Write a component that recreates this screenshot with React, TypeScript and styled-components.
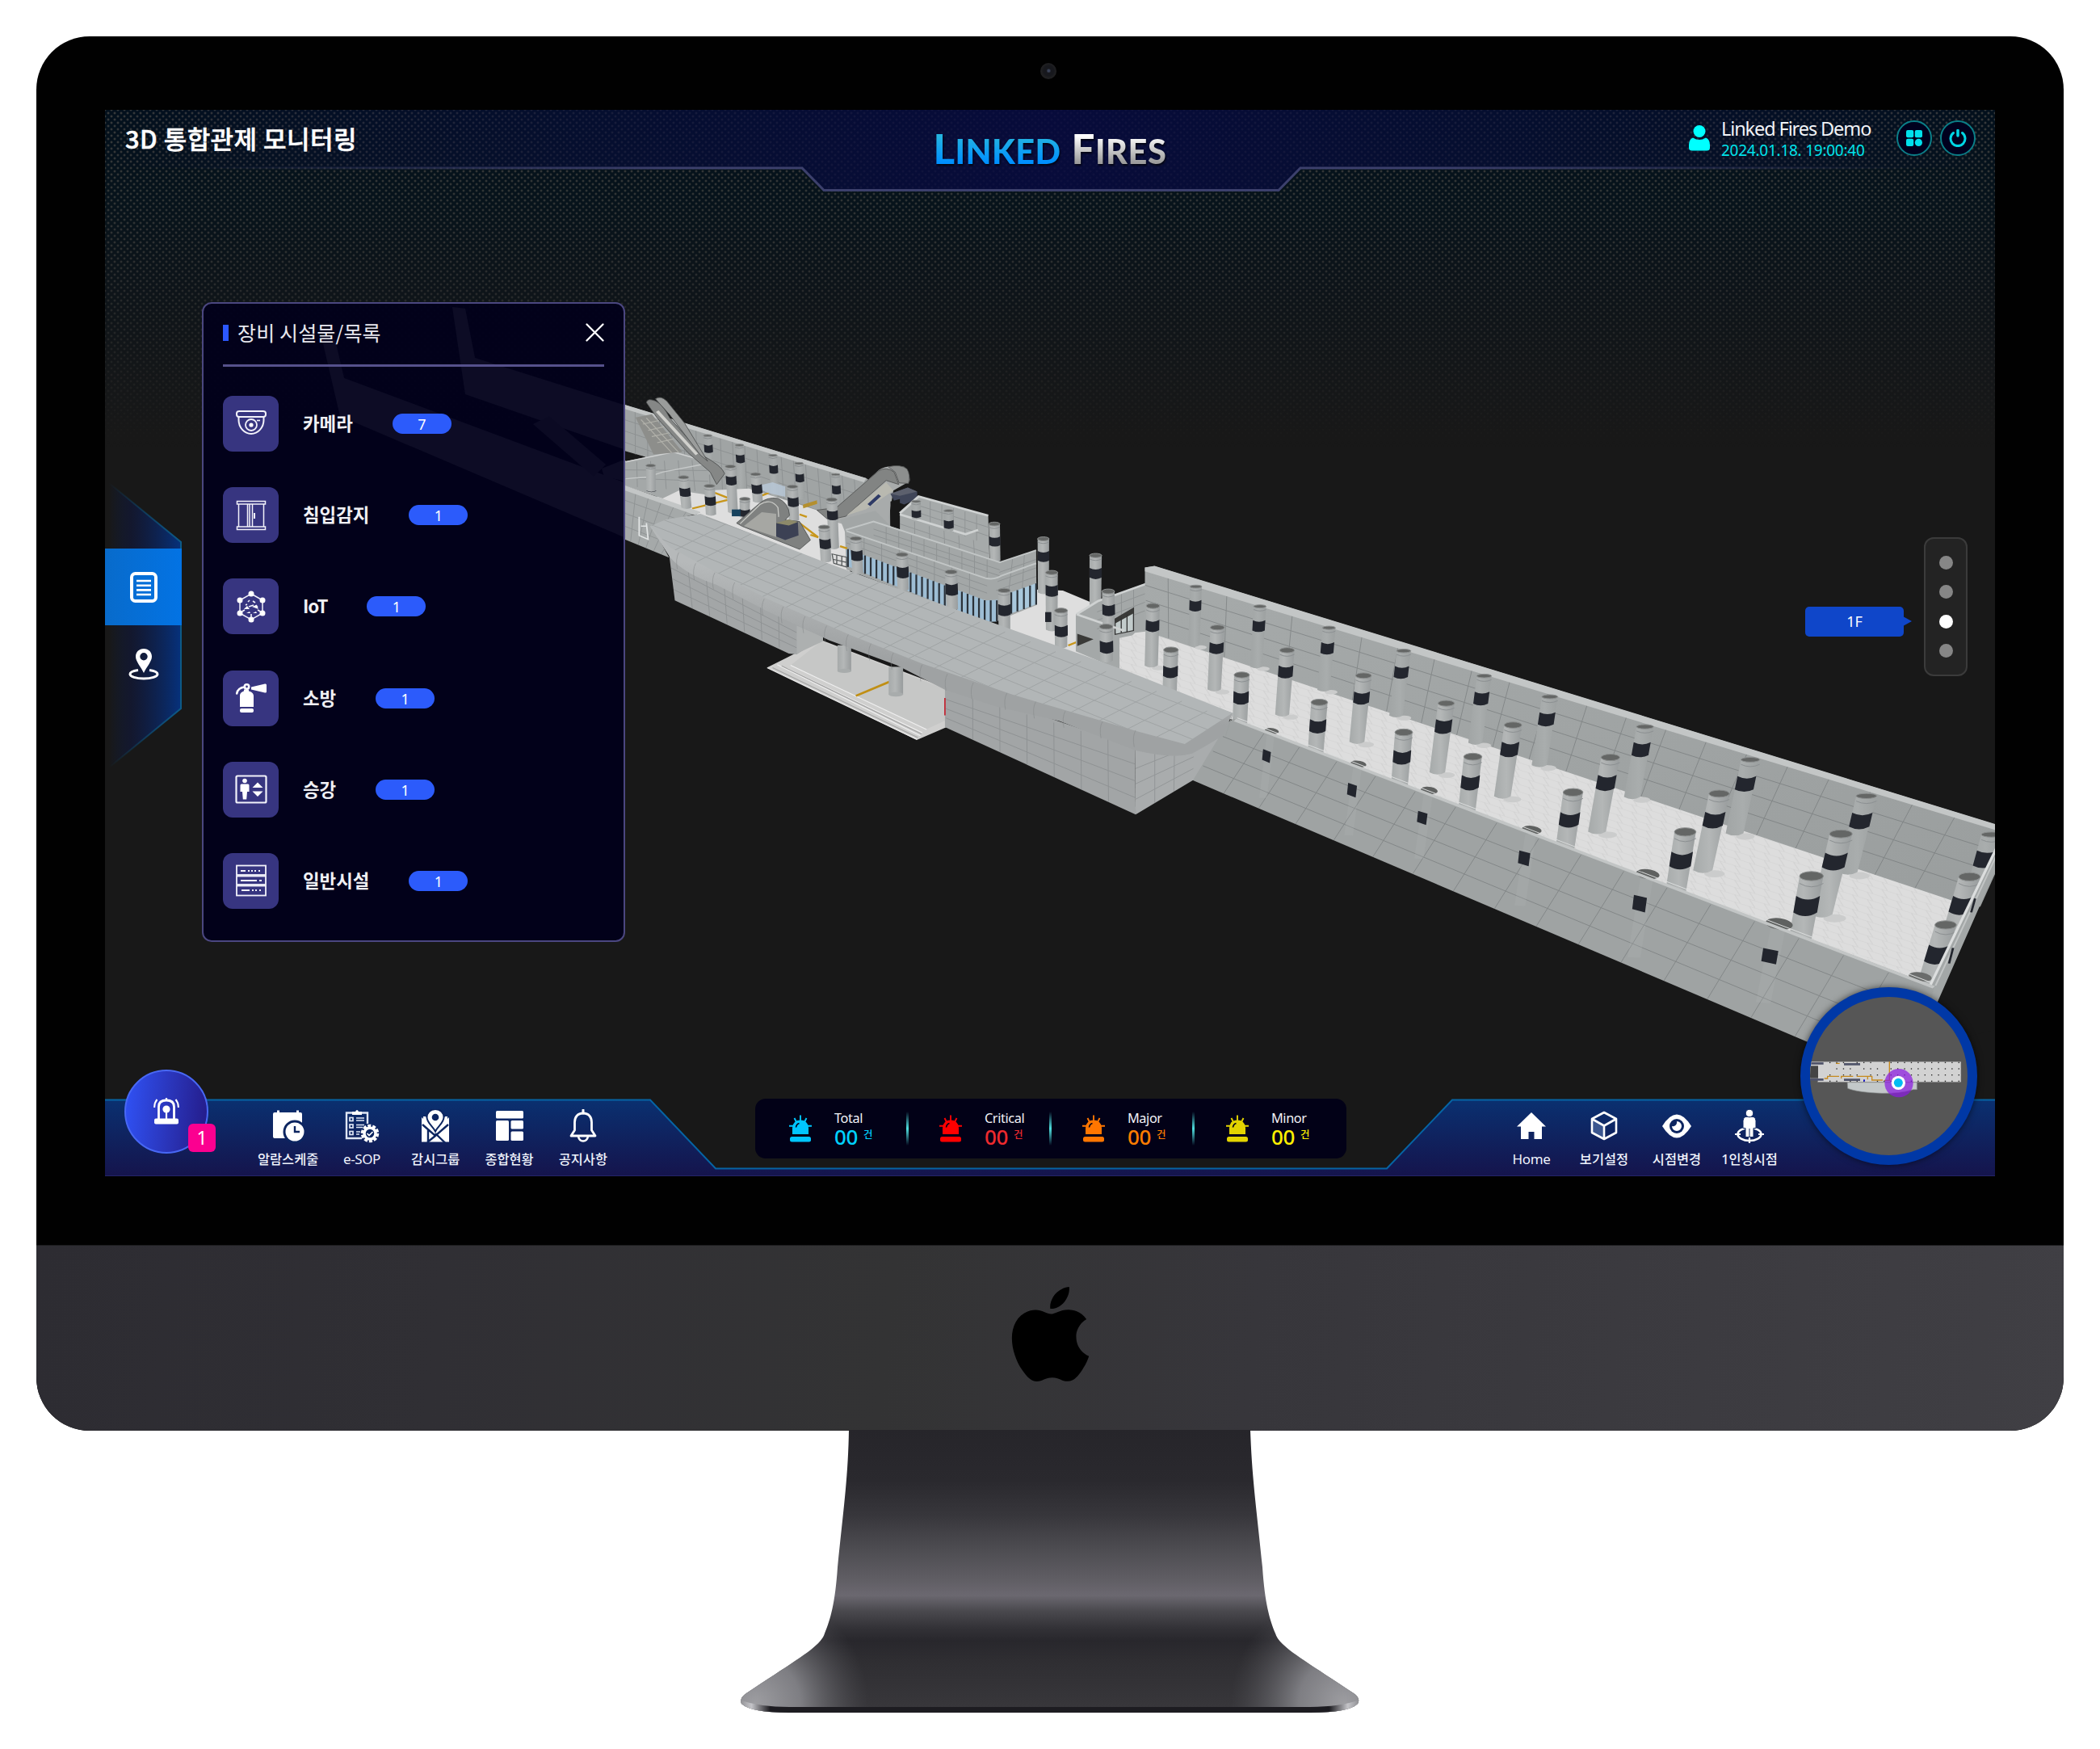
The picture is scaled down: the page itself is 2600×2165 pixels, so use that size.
import React from "react";
import styled, { createGlobalStyle } from "styled-components";
import { SiApple } from "react-icons/si";

const GlobalStyle = createGlobalStyle`
  *, *::before, *::after { box-sizing: border-box; }
  html, body { margin: 0; padding: 0; background: #fff; }
  body { font-family: "Noto Sans", "Noto Sans CJK KR", sans-serif; color: #fff; overflow: hidden; }
  button { font: inherit; color: inherit; }
  svg { display: block; flex: none; }
`;

/* ------------------------------------------------------------ device */

const Page = styled.main`
  width: 2600px;
  height: 2165px;
  padding-top: 45px;
  display: flex;
  flex-direction: column;
  align-items: center;
  background: #fff;
`;

const Monitor = styled.div`
  width: 2510px;
  height: 1726px;
  flex: none;
  border-radius: 66px;
  overflow: hidden;
  background: #010101;
  display: flex;
  flex-direction: column;
  align-items: center;
`;

const TopBezel = styled.div`
  height: 91px;
  width: 100%;
  display: flex;
  justify-content: center;
  padding: 33px 4px 0 0;
`;

const Camera = styled.i`
  width: 20px;
  height: 20px;
  border-radius: 50%;
  background: radial-gradient(circle at 52% 48%, #3a4258 0 8%, #17181d 20% 42%, #1f1f21 60%, #242424 100%);
`;

const Chin = styled.div`
  margin-top: auto;
  width: 100%;
  height: 230px;
  display: flex;
  justify-content: center;
  padding-top: 51px;
  color: #000;
  border-top: 1px solid #1c1c1e;
  background: linear-gradient(96deg, #2d2c32 0%, #302f34 20%, #333334 42%, #37363b 60%, #3c3b40 82%, #403f44 100%);
`;

const StandArt = styled.svg`
  margin-top: -1px;
`;

/* ------------------------------------------------------------ screen */

const Screen = styled.section`
  position: relative;
  width: 2340px;
  height: 1320px;
  flex: none;
  overflow: hidden;
  background: linear-gradient(#03101c 0, #07131b 110px, #0e1419 230px, #181818 400px);
  display: flex;
  flex-direction: column;

  &::before {
    content: "";
    position: absolute;
    inset: 0 0 auto 0;
    height: 420px;
    background-image: radial-gradient(circle, rgba(98, 92, 84, 0.55) 0.9px, transparent 1.9px),
      radial-gradient(circle, rgba(98, 92, 84, 0.55) 0.9px, transparent 1.9px);
    background-size: 8px 8px;
    background-position: 0 0, 4px 4px;
    mask-image: linear-gradient(#000 0, rgba(0, 0, 0, 0.75) 40%, transparent 100%);
  }
`;

const SceneArt = styled.svg`
  position: absolute;
  inset: 0;
`;

const Header = styled.header`
  position: relative;
  height: 110px;
  display: flex;
  justify-content: space-between;
  align-items: flex-start;
`;

const HeaderArt = styled.svg`
  position: absolute;
  inset: 0;
`;

const Title = styled.h1`
  position: relative;
  margin: 13px 0 0 25px;
  width: 500px;
  font-size: 31px;
  line-height: 44px;
  font-weight: 500;
  letter-spacing: 0.45px;
  -webkit-text-stroke: 0.5px #fff;
  font-family: "Noto Sans CJK KR", sans-serif;
`;

const Brand = styled.div`
  position: relative;
  margin-top: 15px;
  display: flex;
  gap: 13px;
  font-family: Lato, sans-serif;
  font-weight: 900;
  font-size: 41.5px;
  line-height: 66px;
`;

const BrandWord = styled.span<{ $from: string; $to: string; $ls: number }>`
  letter-spacing: ${(p) => p.$ls}px;
  background: linear-gradient(${(p) => p.$from} 25%, ${(p) => p.$to} 72%);
  background-clip: text;
  -webkit-background-clip: text;
  color: transparent;
  filter: drop-shadow(1px 2px 1px rgba(0, 0, 0, 0.7));
  &::first-letter {
    font-size: 51px;
  }
`;

const Account = styled.div`
  position: relative;
  width: 525px;
  display: flex;
  justify-content: flex-end;
  align-items: center;
  padding: 6px 24px 0 0;
`;

const AccountText = styled.div`
  width: 207px;
  margin: 2px 0 0 14px;
  display: flex;
  flex-direction: column;
`;

const UserName = styled.span`
  font-size: 23.5px;
  line-height: 30px;
  letter-spacing: -1.1px;
  color: #f1f3f7;
  white-space: nowrap;
`;

const Stamp = styled.time`
  font-size: 19px;
  line-height: 25px;
  letter-spacing: -0.25px;
  color: #00e3ea;
  white-space: nowrap;
`;

const RoundButton = styled.button`
  width: 44px;
  height: 44px;
  margin: 0 0 0 10px;
  padding: 0;
  border: 2.5px solid #0b7f88;
  border-radius: 50%;
  background: #00001e;
  display: grid;
  place-items: center;
`;

const Body = styled.div`
  position: relative;
  flex: 1;
  display: flex;
  align-items: flex-start;
`;

/* -------------------------------------------------------- side tabs */

const SideTabs = styled.nav`
  position: relative;
  width: 95px;
  height: 352px;
  margin-top: 352px;
  padding-top: 81px;
`;

const SideArt = styled.svg`
  position: absolute;
  inset: 0;
`;

const SideTab = styled.button<{ $active?: boolean }>`
  position: relative;
  width: 95px;
  height: 95px;
  padding: 0;
  border: 0;
  display: grid;
  place-items: center;
  background: ${(p) => (p.$active ? "linear-gradient(90deg,#086bcb,#0373e4)" : "none")};
`;

/* ------------------------------------------------------------ panel */

const Panel = styled.aside`
  width: 524px;
  height: 792px;
  margin: 128px 0 0 25px;
  padding: 0 24px;
  border: 2.5px solid #4b4780;
  border-radius: 12px;
  background: rgba(1, 0, 27, 0.93);
`;

const PanelHead = styled.div`
  height: 78px;
  display: flex;
  align-items: center;
  border-bottom: 3px solid #56518c;
  padding-bottom: 4px;
`;

const PanelMark = styled.i`
  width: 7px;
  height: 20px;
  background: #2c58ff;
  margin-right: 11px;
`;

const PanelTitle = styled.h2`
  margin: -2px 0 0;
  flex: 1;
  font-size: 25px;
  font-weight: 400;
  line-height: 36px;
  letter-spacing: 0.15px;
  color: #e8e8ee;
  font-family: "Noto Sans CJK KR", sans-serif;
`;

const DeviceList = styled.ul`
  list-style: none;
  margin: 36px 0 0;
  padding: 0;
  display: flex;
  flex-direction: column;
  gap: 44.2px;
`;

const DeviceRow = styled.li`
  display: flex;
  align-items: center;
  height: 69px;
`;

const DeviceIcon = styled.span`
  width: 69px;
  height: 69px;
  border-radius: 12px;
  background: #373580;
  display: grid;
  place-items: center;
`;

const DeviceName = styled.span<{ $latin?: boolean }>`
  margin: -3px 49px 0 30px;
  font-size: 22.4px;
  font-weight: 700;
  line-height: 30px;
  letter-spacing: ${(p) => (p.$latin ? -1.2 : 0)}px;
  font-family: "Noto Sans CJK KR", sans-serif;
  color: #f0f0f4;
`;

const Pill = styled.span`
  width: 73px;
  height: 25px;
  border-radius: 13px;
  background: #2c5bfb;
  font-size: 18px;
  line-height: 26px;
  text-align: center;
`;

/* --------------------------------------------------- floor selector */

const FloorGroup = styled.div`
  margin: 419px 34px 0 auto;
  display: flex;
  align-items: center;
`;

const FloorTag = styled.span`
  position: relative;
  width: 122px;
  height: 37px;
  margin-right: 25px;
  border-radius: 5px;
  background: #0f46c9;
  font-size: 18px;
  line-height: 37px;
  text-align: center;
  top: 18.5px;
  &::after {
    content: "";
    position: absolute;
    left: 121px;
    top: 12px;
    border: 6px solid transparent;
    border-left: 11px solid #0f46c9;
    border-right: 0;
  }
`;

const FloorRail = styled.div`
  width: 54px;
  height: 172px;
  border: 2px solid #3b3b3b;
  border-radius: 12px;
  background: #232323;
  display: flex;
  flex-direction: column;
  align-items: center;
  justify-content: center;
  gap: 19.6px;
`;

const FloorDot = styled.i<{ $on?: boolean }>`
  width: 17px;
  height: 17px;
  border-radius: 50%;
  background: ${(p) => (p.$on ? "#fff" : "#868686")};
`;

/* ----------------------------------------------------------- footer */

const Footer = styled.footer`
  position: relative;
  height: 96px;
  flex: none;
  display: flex;
  align-items: flex-start;
`;

const FooterArt = styled.svg`
  position: absolute;
  inset: 0;
`;

const NavGroup = styled.nav<{ $ml: number }>`
  position: relative;
  display: flex;
  margin-left: ${(p) => p.$ml}px;
`;

const NavItem = styled.a<{ $w: number }>`
  width: ${(p) => p.$w}px;
  padding-top: 12.5px;
  display: flex;
  flex-direction: column;
  align-items: center;
  gap: 9px;
`;

const NavLabel = styled.span<{ $latin?: boolean }>`
  font-size: ${(p) => (p.$latin ? 17 : 16.4)}px;
  line-height: 22px;
  font-weight: ${(p) => (p.$latin ? 400 : 500)};
  letter-spacing: ${(p) => (p.$latin ? -0.4 : 0)}px;
  color: #eef2fb;
  white-space: nowrap;
`;

const AlarmButton = styled.button`
  position: absolute;
  left: 24px;
  top: -36px;
  width: 104px;
  height: 104px;
  padding: 0;
  border-radius: 50%;
  border: 2.5px solid #4868f4;
  background: linear-gradient(95deg, #2f4ff0 5%, #2a34b8 55%, #241b88 100%);
  display: grid;
  place-items: center;
`;

const AlarmBadge = styled.span`
  position: absolute;
  left: 77px;
  top: 65px;
  width: 34px;
  height: 35px;
  border-radius: 6px;
  background: #fb0090;
  color: #fff;
  font-size: 23px;
  line-height: 35px;
  text-align: center;
`;

const StatusBar = styled.div`
  position: relative;
  width: 732px;
  height: 74px;
  margin-left: 167.5px;
  border-radius: 13px;
  background: #020117;
  display: flex;
`;

const StatusItem = styled.div<{ $w: number; $pl: number }>`
  position: relative;
  width: ${(p) => p.$w}px;
  padding: 14px 0 0 ${(p) => p.$pl}px;
  display: flex;
  gap: 28px;
  &:not(:first-child)::before {
    content: "";
    position: absolute;
    left: -1px;
    top: 16px;
    width: 3px;
    height: 42px;
    background: linear-gradient(transparent, #4fe0e0 50%, transparent);
  }
`;

const StatusText = styled.div`
  display: flex;
  flex-direction: column;
`;

const StatusName = styled.span`
  font-size: 16.3px;
  line-height: 20px;
  letter-spacing: -0.4px;
  color: #f2f2f6;
`;

const StatusCount = styled.span<{ $c: string }>`
  color: ${(p) => p.$c};
  font-size: 26px;
  line-height: 26px;
  font-weight: 500;
  display: flex;
  gap: 7px;
  letter-spacing: -0.4px;
  small {
    font-size: 12.5px;
    line-height: 21px;
  }
`;

const MiniMap = styled.div`
  position: absolute;
  left: 2099px;
  top: 1086px;
  width: 219px;
  height: 220px;
  border-radius: 50%;
  border: 12px solid #0038a6;
  background: #565656;
  overflow: hidden;
  box-shadow: 0 0 8px rgba(0, 0, 0, 0.6);
`;

/* ------------------------------------------------------- scene data */

type Pt = [number, number];
const pts = (a: Pt[]) => a.map((p) => p.join(",")).join(" ");
const mix = (a: Pt, b: Pt, t: number): Pt => [a[0] + (b[0] - a[0]) * t, a[1] + (b[1] - a[1]) * t];

/** Panel seams of a wall: a quad a-b (top edge), d-c (bottom edge). */
function Seams({ a, b, c, d, n, rows, bias = 1, color = "#74787a" }: { a: Pt; b: Pt; c: Pt; d: Pt; n: number; rows: number; bias?: number; color?: string }) {
  const lines: [Pt, Pt][] = [];
  for (let i = 1; i < n; i++) {
    const t = Math.pow(i / n, bias);
    lines.push([mix(a, b, t), mix(d, c, t)]);
  }
  for (let j = 1; j < rows; j++) lines.push([mix(a, d, j / rows), mix(b, c, j / rows)]);
  return (
    <g stroke={color} strokeWidth="1" opacity="0.42">
      {lines.map(([p, q], i) => (
        <line key={i} x1={p[0]} y1={p[1]} x2={q[0]} y2={q[1]} vectorEffect="non-scaling-stroke" />
      ))}
    </g>
  );
}

/** top x, top y, bottom x, bottom y, band top, band bottom, width */
type Col = [number, number, number, number, number, number, number];

function Columns({ list, cap, flat }: { list: Col[]; cap: number; flat?: boolean }) {
  return (
    <>
      {list.map(([tx, ty, bx, by, b0, b1, w], i) => {
        const h = w / 2;
        const at = (y: number) => tx + ((bx - tx) * (y - ty)) / (by - ty);
        const r = w * cap;
        const s0 = at(b0), s1 = at(b1);
        return (
          <g key={i}>
            <path d={`M${tx - h} ${ty}L${bx - h} ${by}Q${bx} ${by + r * 1.6} ${bx + h * 0.9} ${by}L${tx + h} ${ty}Z`} fill={flat ? "url(#colFlat)" : "url(#colFill)"} />
            <path d={`M${s0 - h} ${b0}Q${s0} ${b0 + r * 1.6} ${s0 + h} ${b0}L${s1 + h} ${b1}Q${s1} ${b1 + r * 1.6} ${s1 - h} ${b1}Z`} fill="#23262e" />
            <path d={`M${tx - h} ${ty + r * 1.6}q${h} ${r * 1.5} ${w} 0`} fill="none" stroke="#8c9092" vectorEffect="non-scaling-stroke" />
            <ellipse cx={tx} cy={ty} rx={h} ry={flat ? r * 0.8 : r} fill="#646665" stroke="#8d9090" vectorEffect="non-scaling-stroke" />
          </g>
        );
      })}
    </>
  );
}

const hallBack: Col[] = [
  [115, 162, 112, 340, 203, 233, 21], [228, 222, 222, 405, 264, 295, 22], [350, 287, 341, 475, 331, 363, 23],
  [482, 357, 469, 553, 403, 436, 25], [624, 433, 609, 636, 481, 517, 26], [740, 496, 722, 704, 543, 580, 28],
  [908, 587, 886, 800, 634, 673, 30], [1094, 687, 1067, 910, 737, 777, 33], [1299, 797, 1267, 1028, 848, 890, 36],
  [1520, 914, 1499, 1045, 962, 1008, 36],
];
const hallMid: Col[] = [
  [39, 220, 36, 402, 264, 294, 23], [153, 286, 148, 474, 331, 361, 25], [276, 355, 268, 550, 401, 434, 26],
  [411, 432, 400, 633, 480, 513, 28], [557, 516, 542, 725, 564, 602, 29], [675, 582, 657, 798, 633, 672, 31],
  [847, 680, 824, 905, 733, 774, 33], [1039, 790, 1011, 1022, 845, 887, 36], [1254, 912, 1221, 1156, 969, 1013, 40],
];
const hallFront: Col[] = [
  [71, 354, 69, 500, 402, 433, 26], [196, 430, 193, 590, 479, 513, 27], [333, 513, 326, 690, 564, 600, 29],
  [482, 604, 474, 790, 658, 694, 31], [604, 678, 593, 860, 734, 772, 32], [781, 786, 766, 975, 846, 884, 35],
  [979, 906, 962, 1100, 966, 1010, 38], [1202, 1040, 1181, 1250, 1100, 1150, 42], [1481, 1042, 1450, 1225, 1100, 1148, 38],
  [1439, 1188, 1408, 1365, 1248, 1298, 38],
];
const wallCols = [
  [249, 600, 240, 655, 697, 15], [402, 700, 391, 757, 802, 17], [527, 780, 515, 842, 885, 18],
  [708, 900, 695, 962, 1010, 21], [913, 1034, 899, 1097, 1150, 25], [1145, 1185, 1129, 1258, 1308, 29],
];
const farCols: Col[] = [
  [305, 207, 312, 330, 236, 260, 24], [393, 238, 402, 390, 268, 293, 24], [486, 271, 492, 400, 302, 327, 24],
  [558, 297, 564, 410, 330, 355, 24], [660, 333, 664, 430, 367, 394, 24],
];
const concourse: Col[] = [
  [147, 304, 149, 390, 385, 386, 27], [368, 307, 376, 455, 337, 364, 29], [438, 332, 445, 420, 364, 392, 29],
  [238, 342, 247, 440, 375, 401, 30], [310, 370, 315, 462, 403, 430, 30], [540, 372, 545, 480, 406, 434, 30],
  [408, 412, 408, 470, 445, 466, 29],
];
const concourse2: Col[] = [
  [649, 414, 656, 570, 448, 476, 30], [628, 503, 634, 612, 540, 570, 31], [716, 540, 722, 650, 577, 608, 32],
  [844, 592, 848, 705, 630, 664, 33], [980, 648, 984, 768, 685, 720, 34], [1127, 708, 1129, 838, 752, 786, 34],
];
const plaza: Col[] = [
  [1100, 493, 1103, 612, 533, 561, 31], [1236, 541, 1237, 715, 580, 611, 32], [1381, 595, 1381, 755, 635, 666, 34],
  [1259, 650, 1260, 835, 690, 723, 34],
];
const plazaFront: Col[] = [
  [1416, 711, 1418, 820, 752, 785, 35], [1285, 773, 1286, 890, 820, 853, 36], [1410, 825, 1412, 935, 870, 906, 37],
  [1540, 758, 1537, 950, 803, 836, 37],
];

const roofTop: Pt[] = [[145, 500], [190, 478], [285, 460], [620, 612], [1000, 772], [1460, 965], [1761, 1104], [1628, 1205], [1500, 1165], [1150, 1045], [900, 945], [700, 852], [470, 735], [330, 650], [200, 568]];

const W = "#a0a4a4";
const CAP = "#c3c6c6";

function Scene() {
  return (
    <SceneArt width="2340" height="1320" viewBox="130 136 2340 1320">
      <defs>
        <linearGradient id="colFill">
          <stop offset="0" stopColor="#a6aaaa" />
          <stop offset="0.45" stopColor="#b4b7b7" />
          <stop offset="1" stopColor="#989c9d" />
        </linearGradient>
        <linearGradient id="colFlat">
          <stop offset="0" stopColor="#a1a5a5" />
          <stop offset="0.5" stopColor="#a9adad" />
          <stop offset="1" stopColor="#9ca0a0" />
        </linearGradient>
        <linearGradient id="wallFill" x1="0" y1="0" x2="1" y2="1">
          <stop offset="0" stopColor="#a6aaaa" />
          <stop offset="1" stopColor="#9a9e9e" />
        </linearGradient>
        <linearGradient id="fascia" x1="0.55" y1="0.4" x2="0.45" y2="0.6">
          <stop offset="0" stopColor="#b6b9ba" />
          <stop offset="1" stopColor="#9fa2a3" />
        </linearGradient>
        <pattern id="tile" width="26" height="22" patternUnits="userSpaceOnUse" patternTransform="skewY(28)">
          <rect width="26" height="22" fill="#dddddd" />
          <path d="M0 0H26M0 0L10 22" stroke="#d2d2d2" strokeWidth="2" fill="none" />
        </pattern>
        <clipPath id="roofClip"><polygon points={pts(roofTop)} /></clipPath>
      </defs>

      {/* wings that continue under the equipment panel */}
      <g fill="#a6a9aa">
        <polygon points="560,380 576,382 588,443 775,502 775,557 576,488" />
        <polygon points="399,421 415,421 426,468 775,598 775,666 421,515" />
        <polygon points="660,525 680,515 750,575 735,590" fill="#8c8f90" />
        <polygon points="745,580 775,568 775,596 748,590" />
      </g>

      {/* concourse, roof and porch */}
      <g transform="translate(740 460) scale(.44643 .38265)">
        <polygon points="70,106 745,345 810,400 812,520 600,560 380,440 130,275 70,255" fill={W} />
        <Seams a={[70, 118]} b={[745, 356]} c={[760, 560]} d={[70, 262]} n={20} rows={4} />
        <polygon points="70,105 745,345 738,358 70,119" fill={CAP} />
        <polygon points="70,262 130,275 70,290" fill="#181818" />
        <Columns list={farCols} cap={0.18} flat />
        <polygon points="160,405 225,383 300,385 420,378 560,430 690,480 700,660 600,605 290,470" fill="#dedede" />
        <path d="M262 443L360 415M325 392L360 408M440 408L475 392M570 436L608 424M560 490L610 535M560 462l20 8" stroke="#c8961a" strokeWidth="6" fill="none" />
        <path d="M435 372L485 358L520 372V405L470 392Z" fill="#b9c9d9" opacity=".8" />
        <path d="M570 430l38-14v12l-38 14z" fill="#b48f2e" />
        <polygon points="70,292 210,258 305,288 312,400 225,385 180,410 70,368" fill="#a4a8a8" />
        <Seams a={[70, 292]} b={[300, 285]} c={[310, 390]} d={[70, 370]} n={6} rows={3} />
        <path d="M77 346L135 342L180 325L300 298" fill="none" stroke="#c6c9c9" strokeWidth="4" />
        <path d="M77 292L210 260L300 290" fill="none" stroke="#cfd1d1" strokeWidth="4" />
        {/* rear escalator */}
        <path d="M105 148L150 138L235 260L155 268Z" fill="#8d8e8b" />
        <path d="M120 155L205 262M135 150L225 262M125 170l45-12M140 190l45-12M150 210l50-12M165 230l45-12" stroke="#b1b1aa" strokeWidth="3" />
        <path d="M135 100Q138 84 160 95Q180 105 200 150L292 272Q345 305 352 330L330 365L312 325L250 262L165 150Z" fill="#858786" stroke="#4b4d4d" strokeWidth="2" />
        <path d="M160 88Q175 76 192 96L240 165L305 290L285 270L200 140Z" fill="#9a9c9b" stroke="#4b4d4d" strokeWidth="2" />
        <path d="M165 128L275 268" stroke="#d0d0cc" strokeWidth="9" />
        <polygon points="70,368 285,456 150,498 198,602 70,540" fill="#a5a9a9" />
        <Seams a={[70, 372]} b={[285, 460]} c={[198, 600]} d={[70, 540]} n={6} rows={4} />
        <polygon points="70,366 285,454 270,464 70,382" fill={CAP} />
        <path d="M115 470V530L140 543L135 490M120 500h14" fill="none" stroke="#e2e5e5" strokeWidth="4" />
        <Columns list={concourse} cap={0.18} />
        <rect x="372" y="446" width="24" height="22" fill="#17425e" />
        {/* front-left escalator */}
        <path d="M385 490L450 425Q470 405 500 410Q530 425 532 465L520 480L560 485L590 545L560 575L400 500Z" fill="#7f8180" stroke="#4c4e4e" strokeWidth="2" />
        <path d="M405 500L455 455L495 460V535Z" fill="#a6a7a3" />
        <path d="M395 492L450 430Q480 408 500 440L502 470" fill="none" stroke="#c9cac6" strokeWidth="3" />
        <polygon points="495,490 555,484 557,530 520,545 495,533" fill="#3c4154" />
        <polygon points="495,490 530,478 556,486 530,498" fill="#8d8a6a" />
        {/* right escalator */}
        <path d="M612 445L665 440L780 318Q800 300 850 308Q868 330 865 355L820 385L808 470L810 505L700 500L640 480Z" fill="#a8abab" />
        <path d="M608 448L662 440L778 322Q800 305 822 325L835 365L800 352L688 468L640 480Z" fill="#828483" stroke="#4e5050" strokeWidth="2" />
        <path d="M806 308Q840 298 858 315Q868 335 862 362L836 360L825 325Z" fill="#8d8f8e" stroke="#4e5050" strokeWidth="2" />
        <path d="M690 465L800 358L820 385L745 445Z" fill="#b9b9b0" />
        <path d="M752 432L782 400" stroke="#2e3a66" strokeWidth="10" />
        <polygon points="812,395 860,375 886,388 886,412 850,430 822,418" fill="#3f4558" />
        <polygon points="812,395 860,375 886,388 838,402" fill="#5c606d" />
        <polygon points="812,420 838,412 838,512 812,500" fill="#181818" />
        {/* far block */}
        <polygon points="838,458 890,404 1083,466 1087,618 1010,590 838,515" fill="#a6aaaa" />
        <Seams a={[838, 470]} b={[1083, 560]} c={[1087, 618]} d={[838, 515]} n={6} rows={2} />
        <Seams a={[890, 410]} b={[1083, 475]} c={[1083, 560]} d={[890, 480]} n={6} rows={3} />
        <path d="M838 458L890 404L1083 466M838 462L1020 526L1055 512" fill="none" stroke="#cfd2d2" strokeWidth="7" />
        <Columns list={[[883, 420, 884, 475, 448, 470, 26], [973, 450, 974, 515, 480, 505, 27]]} cap={0.18} flat />
        <Columns list={plaza.slice(0, 1)} cap={0.2} />
        {/* floor strip and plaza */}
        <polygon points="1120,800 1215,705 1290,708 1365,745 1365,790 1568,840 1568,1010 1120,835" fill="#dedede" />
        <path d="M1305 886L1330 874" stroke="#c8961a" strokeWidth="6" />
        <Columns list={plaza.slice(1)} cap={0.2} />
        <rect x="1241" y="778" width="17" height="32" fill="#22252d" />
        {/* glazed room */}
        <polygon points="672,478 770,450 812,500 700,560" fill="#a2a6a6" />
        <polygon points="685,510 765,483 1118,617 1216,578 1217,755 1106,808 1072,808 690,640" fill="#a3a7a7" />
        <Seams a={[765, 490]} b={[1115, 622]} c={[1115, 680]} d={[765, 548]} n={10} rows={3} />
        <Seams a={[690, 512]} b={[1080, 670]} c={[1080, 740]} d={[690, 575]} n={8} rows={3} />
        <Seams a={[1118, 620]} b={[1216, 580]} c={[1216, 690]} d={[1100, 738]} n={3} rows={4} />
        <path d="M688 512L765 485L1115 617L1216 578M690 516L1075 668Q1100 675 1120 660L1216 620" fill="none" stroke="#c2c6c6" strokeWidth="5" />
        <polygon points="690,572 1075,740 1109,738 1107,808 1072,810 690,628" fill="#9dbdd4" />
        <polygon points="1145,715 1217,684 1217,752 1145,783" fill="#a9c8dc" />
        <g stroke="#2b3138" strokeWidth="5">
          {Array.from({ length: 25 }, (_, i) => {
            const x = 694 + i * 15.8;
            return <line key={i} x1={x} y1={574 + i * 6.9} x2={x} y2={632 + i * 7.4} />;
          })}
          {[1090, 1107, 1147, 1164, 1182, 1199, 1216].map((x) => (
            <line key={x} x1={x} y1={x < 1110 ? 740 : 714 - (x - 1147) * 0.42} x2={x} y2={x < 1110 ? 808 : 783 - (x - 1147) * 0.42} />
          ))}
        </g>
        <path d="M650 590L690 600V632L655 620Z M663 594V624 M677 598V628 M652 607L690 617" fill="none" stroke="#55595a" strokeWidth="3" />
        <path d="M590 528L612 536M672 565L692 572M1000 778L1060 806" stroke="#c8961a" strokeWidth="6" />
        <Columns list={concourse2} cap={0.2} />
        {/* ticket booth */}
        <polygon points="1326,785 1385,742 1520,685 1520,640 1540,632 1600,655 1600,830 1490,845 1460,880 1460,970 1326,905" fill="#a4a8a8" />
        <Seams a={[1385, 750]} b={[1520, 690]} c={[1520, 800]} d={[1385, 860]} n={4} rows={4} />
        <polygon points="1435,800 1486,765 1486,838 1435,850" fill="#c2cbcb" stroke="#333" strokeWidth="3" />
        <path d="M1435 800L1486 765V782L1435 815ZM1330 848L1375 866L1330 888Z" fill="#3a3a38" />
        <path d="M1452 795V845M1468 785V842" stroke="#333" strokeWidth="3" />
        <path d="M1328 785L1388 742L1520 687M1328 785L1460 838" fill="none" stroke="#cfd2d2" strokeWidth="7" />
      </g>

      {/* long hall */}
      <g transform="translate(1400 660) scale(.70114 .40816)">
        <polygon points="25,104 42,100 1530,885 1530,1140 1455,1122 30,304 25,290" fill="url(#wallFill)" />
        <Seams a={[25, 112]} b={[1530, 900]} c={[1455, 1120]} d={[28, 296]} n={23} rows={4} bias={1.15} color="#5c6062" />
        <polygon points="25,104 42,99 1530,884 1530,902 25,116" fill={CAP} />
        <polygon points="-20,318 30,300 1457,1118 1405,1365 180,566 -20,440" fill="url(#tile)" />
        {[...hallMid, ...hallBack.slice(0, 9)].map(([, , x, y, , , w], i) => (
          <ellipse key={i} cx={x + w * 0.55} cy={y + w * 0.3} rx={w * 0.5} ry={w * 0.3} fill="#cbcccc" />
        ))}
        <Columns list={hallBack} cap={0.27} flat />
        <Columns list={hallMid} cap={0.3} />
        <Columns list={hallFront} cap={0.33} />
        {/* end wall */}
        <polygon points="1535,1000 1540,1500 1400,1560 1425,1420" fill="#181818" />
        <polygon points="1530,950 1530,1010 1420,1440 1300,1560 1412,1372" fill="#a3a7a7" />
        <path d="M1530 950L1412 1370" stroke="#dcdede" strokeWidth="5" fill="none" />
        <path d="M1530 972L1421 1372" stroke="#c2c5c5" strokeWidth="3" fill="none" />
        <path d="M1491 1108L1484 1150M1452 1258L1445 1305" stroke="#23262e" strokeWidth="4" />
        {/* front wall */}
        <polygon points="182,563 1418,1378 1400,1560 1195,1543 110,750 100,640" fill="#9fa3a3" />
        <Seams a={[180, 572]} b={[1418, 1385]} c={[1330, 1640]} d={[110, 750]} n={17} rows={4} bias={1.1} color="#5c6062" />
        {wallCols.map(([cx, cy, bx, b0, b1, w], i) => (
          <g key={i}>
            <ellipse cx={cx} cy={cy} rx={w * 0.85} ry={w * 0.58} fill="#5f6160" transform={`rotate(20 ${cx} ${cy})`} />
            <path d={`M${cx - 2} ${cy + 14}l${-w * 0.9} ${(b1 - b0) * 4.5}`} stroke="#b2b6b6" strokeWidth={w * 0.9} opacity="0.22" />
            <path d={`M${bx - w * 0.42} ${b0}l${w * 0.92} 9l${-w * 0.14} ${b1 - b0 - 9}l${-w * 0.9} -10z`} fill="#22252d" />
          </g>
        ))}
        <ellipse cx="1394" cy="1345" rx="21" ry="13" fill="#6a6c6b" transform="rotate(20 1394 1345)" />
        <path d="M184 567L1418 1377" stroke="#c2c5c5" strokeWidth="8" />
        <path d="M188 560L1412 1362" stroke="#dcdede" strokeWidth="2" />
      </g>

      <g transform="translate(740 460) scale(.44643 .38265)">
        <Columns list={plazaFront} cap={0.22} />
        {/* porch */}
        <polygon points="470,957 525,925 620,868 970,1025 968,1150 885,1192" fill="#cfcfce" />
        <polygon points="535,950 620,872 965,1028 965,1128 910,1158" fill="#c6c7c6" />
        <path d="M470 958L885 1190M498 948L895 1178M525 960L900 1168M535 950L912 1158" stroke="#efefef" strokeWidth="3" fill="none" />
        <path d="M485 958L888 1184M510 952L898 1172" stroke="#a5a5a5" strokeWidth="3" fill="none" />
        <path d="M716 1049L810 1003" stroke="#c08f14" strokeWidth="7" />
        <rect x="665" y="885" width="38" height="85" fill="url(#colFill)" />
        <ellipse cx="684" cy="968" rx="19" ry="7" fill="#a8acac" />
        <rect x="807" y="955" width="40" height="90" fill="url(#colFill)" />
        <ellipse cx="827" cy="1044" rx="20" ry="7" fill="#a8acac" />
        {/* entrance block walls */}
        <polygon points="198,590 330,670 552,800 625,860 552,915 530,912 214,740" fill="#a3a6a7" />
        <Seams a={[200, 600]} b={[552, 820]} c={[552, 918]} d={[214, 740]} n={7} rows={4} />
        <polygon points="552,822 625,858 625,872 552,912" fill="#adb0b0" />
        <polygon points="963,1020 1150,1080 1490,1215 1492,1433 963,1150" fill="#a2a5a6" />
        <Seams a={[965, 1030]} b={[1490, 1215]} c={[1492, 1433]} d={[965, 1150]} n={7} rows={4} />
        <polygon points="1490,1215 1640,1225 1735,1160 1651,1322 1492,1433" fill="#a9acad" />
        <Seams a={[1490, 1235]} b={[1655, 1170]} c={[1651, 1322]} d={[1492, 1433]} n={3} rows={4} />
        <path d="M963 1056V1112" stroke="#c32a36" strokeWidth="4" />
        {/* roof */}
        <path d="M145 500L200 600Q240 655 330 690L470 775L640 868L830 950L965 1030L1100 1082L1280 1130L1490 1225Q1600 1255 1650 1235Q1720 1190 1735 1175L1761 1104Z" fill="url(#fascia)" />
        <polygon points={pts(roofTop)} fill="#b2b6b7" />
        <g clipPath="url(#roofClip)" stroke="#85898a" strokeWidth="1" opacity="0.4">
          {Array.from({ length: 24 }, (_, i) => (
            <line key={i} x1={160 + i * 70} y1={610 + i * 32} x2={360 + i * 70} y2={490 + i * 32} vectorEffect="non-scaling-stroke" />
          ))}
          {Array.from({ length: 9 }, (_, i) => (
            <line key={i} x1={300 - i * 60} y1={470 + i * 4} x2={1900 - i * 60} y2={1150 + i * 24} vectorEffect="non-scaling-stroke" />
          ))}
        </g>
        <g stroke="#7f8384" strokeWidth="2" fill="none" opacity="0.55">
          {([[225, 585], [272, 620], [325, 650], [380, 682], [462, 735], [515, 760], [575, 792], [635, 822], [695, 850], [758, 880], [820, 910], [900, 948], [970, 978], [1042, 1006], [1135, 1040], [1215, 1068], [1297, 1098], [1400, 1132], [1492, 1160]] as Pt[]).map(([x, y]) => (
            <path key={x} d={`M${x} ${y}q-10 20 -4 54`} />
          ))}
        </g>
        <path d="M1761 1106L1741 1180" stroke="#9b9fa0" strokeWidth="2" />
      </g>
    </SceneArt>
  );
}

/* ------------------------------------------------------------ icons */

const sv = (w: number, h: number, vb: string, kids: React.ReactNode, extra: React.SVGProps<SVGSVGElement> = {}) => (
  <svg width={w} height={h} viewBox={vb} fill="none" stroke="#f2f2fa" {...extra}>{kids}</svg>
);

const DomeCam = () => sv(40, 40, "0 0 40 40", <>
  <rect x="2" y="4" width="36" height="7" rx="3" strokeWidth="2" />
  <path d="M4.500 11v4c0 9 7 17 15.500 17s15.500-8 15.500-17v-4" strokeWidth="2" />
  <circle cx="20" cy="21" r="7" strokeWidth="1.800" /><circle cx="20" cy="21" r="2.600" fill="#fff" stroke="none" />
  <path d="M27 15.500h4" strokeWidth="1.600" /></>);
const Door = () => sv(38, 38, "0 0 38 38", <>
  <g strokeWidth="1.500"><rect x="1.500" y="1.500" width="35" height="3.500" /><rect x="1.500" y="33" width="35" height="3.500" />
  <path d="M3.500 5v28M34.500 5v28M14.500 5v28M17 5v28M20.500 5v28" /></g><path d="M23 16v7" strokeWidth="2" /></>);
const Iot = () => sv(38, 40, "0 0 38 40", <>
  <path d="M19 4L33 12V28L19 36L5 28V12Z" strokeWidth="1.500" />
  {[[19, 4], [33, 12], [33, 28], [19, 36], [5, 28], [5, 12]].map(([x, y]) => <circle key={x + "-" + y} cx={x} cy={y} r="3.500" fill="#fff" stroke="none" />)}
  <path d="M15 14l2-2M21 13l3 2M25 18l2 3M12 18l2-1M16 20l6-2M19 29v5M6 27l5-3M32 27l-5-3" strokeWidth="1.600" />
  <path d="M10 23l4-4 3 4zM20 20l5-2 3 5zM13 28l4-2 1 2zM21 28l4-2 1 2z" fill="#fff" stroke="none" /></>);
const Extinguisher = () => sv(40, 40, "0 0 40 40", <g fill="#fff" stroke="none">
  <path d="M6 17c0-3 3-5 5-5.500V9.500h6v2c3 .500 6 2.500 6 6V31H6z" /><rect x="6" y="33" width="17" height="5" rx="2" />
  <path d="M20 6.500L37 2.500q2-.500 2 1.500v8q0 2-2 1.500L20 9.500z" /><circle cx="14.500" cy="6" r="4" /><circle cx="14.500" cy="6" r="1.400" fill="#373580" />
  <path d="M12 6.500C6 7 3 10 2.200 14.500" stroke="#fff" strokeWidth="2.600" fill="none" strokeLinecap="round" /></g>);
const Lift = () => sv(40, 36, "0 0 40 36", <>
  <rect x="1.500" y="1.500" width="37" height="33" rx="1.500" strokeWidth="2.200" />
  <g fill="#fff" stroke="none"><circle cx="12" cy="7.500" r="2.800" /><path d="M8 11.500h8q1.500 0 1.500 1.500v8h-2.500l-.800 9.500h-4.400L9 21H6.500v-8Q6.500 11.500 8 11.500z" />
  <path d="M28 9.500l6.500 6.500h-13zM28 27l6.500-6.500h-13z" /></g></>);
const Rack = () => sv(38, 40, "0 0 38 40", <>
  <g strokeWidth="1.800"><rect x="1" y="1.500" width="36" height="11.500" /><rect x="1" y="14.500" width="36" height="10.500" /><rect x="1" y="26.500" width="36" height="12" /></g>
  <path d="M6 8h6M15 8h2M19 8h2M23 8h2M28 8h2M6 20h20M29 20h3M7 32h10M20 32h2M24 32h2M29 32h2" strokeWidth="1.900" /></>);

const ListIcon = () => sv(34, 38, "0 0 34 38", <>
  <rect x="2" y="2" width="30" height="34" rx="4.500" strokeWidth="4" stroke="#fff" /><path d="M8 11h18M8 16.700h18M8 22.400h18M8 28h18" strokeWidth="2.600" stroke="#fff" /></>);
const PinIcon = () => sv(38, 40, "0 0 38 40", <>
  <path d="M12 27.500C6 28.500 2 30 2 32.500c0 3 7.500 5.500 17 5.500s17-2.500 17-5.500c0-2.500-4-4-10-5" stroke="#fff" strokeWidth="3" />
  <path fillRule="evenodd" d="M19 1c6 0 10 4.300 10 9.700C29 17 22 24 19 31C16 24 9 17 9 10.700C9 5.300 13 1 19 1zm0 5a4.700 4.700 0 1 0 0 9.400A4.700 4.700 0 0 0 19 6z" fill="#fff" stroke="none" /></>);

const ink = "#0c2560";
const CalClock = () => sv(40, 42, "0 0 40 42", <g fill="#fff" stroke="none">
  <path d="M3 4h3V1.500h3V4h21V1.500h3V4h2q2 0 2 2v30H3q-2 0-2-2V6Q1 4 3 4z" /><circle cx="28" cy="28" r="14.500" fill={ink} /><circle cx="28" cy="28" r="11.500" />
  <path d="M28 21v7h6" stroke={ink} strokeWidth="2.400" fill="none" /></g>);
const Sop = () => sv(44, 42, "0 0 44 42", <>
  <path d="M12 4.500H3V36h19M20 4.500h9V18" strokeWidth="2.400" stroke="#dfe6f4" />
  <path d="M10 3h4q2-4 4 0h4v4H10z" fill="#fff" stroke="none" />
  <g stroke="#dfe6f4" strokeWidth="1.700"><rect x="7" y="10.500" width="4" height="4" /><rect x="7" y="19" width="4" height="4" /><rect x="7" y="27.500" width="4" height="4" />
  <path d="M15 11h10M15 14h10M15 19.500h10M15 22.500h8M15 28h5M15 31h4" /></g>
  <circle cx="32" cy="30" r="9" fill="none" stroke="#fff" strokeWidth="4.500" strokeDasharray="3.800 1.850" /><circle cx="32" cy="30" r="7" stroke="#fff" strokeWidth="3.500" fill={ink} />
  <path d="M28.500 30l2.500 2.500 4.500-4.500" stroke="#fff" strokeWidth="1.700" /></>);
const MapPin = () => sv(36, 42, "0 0 36 42", <g fill="#fff" stroke="none">
  <path d="M1 10L18 27L35 10V40.500H1z" />
  <path d="M2 19L18 33L34 19M18 33L8 41M18 30L30 41.500M9 25V41" stroke={ink} strokeWidth="2.400" fill="none" />
  <path d="M3 9h3L18 26 30 9h3v5L18 30 3 14z" />
  <path d="M18 0c6.500 0 10.500 4.500 10.500 10C28.500 17 21 21 18 27.500C15 21 7.500 17 7.500 10C7.500 4.500 11.500 0 18 0z" stroke={ink} strokeWidth="2" /><circle cx="18" cy="10" r="4.300" fill={ink} /></g>);
const Board = () => sv(34, 37, "0 0 34 37", <g fill="#fff" stroke="none">
  <rect width="34" height="9.500" rx="1.500" /><rect y="12" width="16" height="25" rx="1.500" /><rect x="18.500" y="12" width="15.500" height="10.500" rx="1.500" /><rect x="18.500" y="25.500" width="15.500" height="11.500" rx="1.500" /></g>);
const Bell = () => sv(34, 42, "0 0 34 42", <>
  <path d="M17 5C10 5 6.500 10 6.500 16V26L2 33H32L27.500 26V16C27.500 10 24 5 17 5z" stroke="#fff" strokeWidth="2.800" strokeLinejoin="round" /><path d="M17 1v4" stroke="#fff" strokeWidth="3" strokeLinecap="round" />
  <path d="M11 34c1 4 3 5.500 6 5.500s5-1.500 6-5.500" stroke="#fff" strokeWidth="2.600" /></>);
const Home = () => sv(36, 34, "0 0 36 34", <path d="M18 0L36 17.500H31V33H21.500V24h-7v9H5V17.500H0z" fill="#fff" stroke="none" strokeLinejoin="round" />);
const Cube = () => sv(34, 37, "0 0 34 37", <>
  <path d="M2 10L17 18.500V35L2 27z" fill="#3b568f" stroke="none" /><path d="M17 2L32 10V27L17 35L2 27V10ZM2 10L17 18.500L32 10M17 18.500V35" stroke="#fff" strokeWidth="2.600" strokeLinejoin="round" /></>);
const Eye = () => sv(38, 32, "0 0 38 32", <>
  <path d="M1 16Q10 1.500 19 1.500T37 16Q28 30.500 19 30.500T1 16z" fill="#fff" stroke="none" /><circle cx="19" cy="16" r="9" fill={ink} stroke="none" />
  <path d="M19 10a6 6 0 1 1-6 6a5 5 0 0 0 6-6z" fill="#fff" stroke="none" /></>);
const Person = () => sv(36, 42, "0 0 36 42", <>
  <ellipse cx="18" cy="31" rx="14.500" ry="8" stroke="#fff" strokeWidth="2.600" /><path d="M0 31h7M29 31h7M18 35v7" stroke="#fff" strokeWidth="2.200" />
  <g fill="#fff" stroke={ink} strokeWidth="1"><path d="M13 9.500h10q3 1 3 5v9h-3v11H13v-11h-3v-9q0-4 3-5z" /><circle cx="18" cy="5" r="4.800" /></g><path d="M18 24v10" stroke={ink} strokeWidth="1" /></>);
const AlarmIcon = () => sv(32, 34, "0 0 32 34", <>
  <rect x="1" y="25.500" width="30" height="7" rx="2" fill="#fff" stroke="none" />
  <path d="M6.500 26V11C6.500 5 10 3 16 3s9.500 2 9.500 8v15" stroke="#fff" strokeWidth="2.800" /><circle cx="16" cy="14" r="4.600" fill="#fff" stroke="none" /><path d="M16 14v12M16 0v4" stroke="#fff" strokeWidth="2.200" />
  <path d="M4.500 2C2 5 1 8 1.200 12M27.500 2C30 5 31 8 30.800 12" stroke="#fff" strokeWidth="2" /></>);

const SirenArt = styled.svg`
  margin-top: 6px;
`;
const Siren = ({ c }: { c: string }) => (
  <SirenArt width="28" height="34" viewBox="0 0 28 34" fill={c}>
    <rect x="1" y="27" width="26" height="6.500" rx="2.500" />
    <path d="M4 24V16Q5 6.500 14 6.500T24 16V24z" />
    <path d="M14 0.500v7M6.500 4l2.500 5M21.500 4l-2.500 5M0 13.800h5M23 13.800h5" stroke={c} strokeWidth="1.900" />
    <path d="M8.500 15.500q.500-4 4-5" stroke="#020117" strokeWidth="1.700" fill="none" />
  </SirenArt>
);

/* ------------------------------------------------------------- data */

const devices = [
  { name: "카메라", n: 7, icon: <DomeCam /> },
  { name: "침입감지", n: 1, icon: <Door /> },
  { name: "IoT", n: 1, icon: <Iot />, latin: true },
  { name: "소방", n: 1, icon: <Extinguisher /> },
  { name: "승강", n: 1, icon: <Lift /> },
  { name: "일반시설", n: 1, icon: <Rack /> },
];

const leftNav = [
  { label: "알람스케줄", icon: <CalClock /> },
  { label: "e-SOP", icon: <Sop />, latin: true },
  { label: "감시그룹", icon: <MapPin /> },
  { label: "종합현황", icon: <Board /> },
  { label: "공지사항", icon: <Bell /> },
];
const rightNav = [
  { label: "Home", icon: <Home />, latin: true },
  { label: "보기설정", icon: <Cube /> },
  { label: "시점변경", icon: <Eye /> },
  { label: "1인칭시점", icon: <Person /> },
];
const status = [
  { name: "Total", c: "#00c6ff", t: "#00d2ff", w: 188, pl: 42 },
  { name: "Critical", c: "#ff0000", t: "#ee2a2e", w: 177, pl: 40 },
  { name: "Major", c: "#ff7600", t: "#ff7d00", w: 177, pl: 40 },
  { name: "Minor", c: "#e3d400", t: "#fff000", w: 190, pl: 41 },
];

const NavIcon = styled.span`
  height: 42px;
  display: grid;
  place-items: center;
`;

function Nav({ items, w, ml }: { items: { label: string; icon: React.ReactNode; latin?: boolean }[]; w: number; ml: number }) {
  return (
    <NavGroup $ml={ml}>
      {items.map((it) => (
        <NavItem key={it.label} $w={w}>
          <NavIcon>{it.icon}</NavIcon>
          <NavLabel $latin={it.latin}>{it.label}</NavLabel>
        </NavItem>
      ))}
    </NavGroup>
  );
}

function MiniPlan() {
  const dots: React.ReactNode[] = [];
  for (let i = 0; i < 20; i++)
    for (let j = 0; j < 4; j++) {
      if (i < 9 && (i * 3 + j * 5) % 4 === 1) continue;
      dots.push(<rect key={`${i}-${j}`} x={38 + i * 25.2} y={282 + j * 23} width="4" height="4" fill="#222" />);
    }
  return (
    <svg width="195" height="196" viewBox="62 40 585 588">
      <path d="M200 350H459V384H445Q400 398 330 398Q240 395 202 380Z" fill="#c3c8c9" stroke="#8b8f90" strokeWidth="2" />
      <path d="M60 280H623V357H90V345H60Z" fill="#d2d2d2" stroke="#666" strokeWidth="2" />
      <rect x="60" y="296" width="32" height="46" fill="#444" />
      <g transform="translate(96 0)">{dots}</g>
      <path d="M60 287h52M60 347h52M188 290h60M188 348h60" stroke="#50546a" strokeWidth="8" />
      <path d="M115 343H127V335H170M178 343V335H222M235 335H292V349H332M338 350H357V280M158 287H172M276 335V347" stroke="#c68a1e" strokeWidth="4" fill="none" />
      <rect x="260" y="347" width="6" height="7" fill="#1a1ad0" />
      <circle cx="392" cy="360" r="53" fill="#8a1be0" opacity="0.72" />
      <circle cx="390" cy="359" r="26" fill="#fff" />
      <circle cx="390" cy="359" r="16.500" fill="#00bcf2" />
    </svg>
  );
}

function Stand() {
  const body = "M1051 1770C1050 1830 1044 1870 1037 1940C1034 1985 1028 2005 1021 2022C1016 2038 990 2052 924 2096Q915 2102 918 2109Q930 2120 977 2120H1622Q1670 2120 1681 2109Q1685 2102 1676 2096C1610 2052 1584 2038 1579 2022C1572 2005 1566 1985 1563 1940C1556 1870 1550 1830 1548 1770Z";
  return (
    <StandArt width="800" height="370" viewBox="900 1770 800 370">
      <defs>
        <linearGradient id="st" x1="0" y1="1770" x2="0" y2="2120" gradientUnits="userSpaceOnUse">
          <stop offset="0" stopColor="#26252a" /><stop offset=".18" stopColor="#2a292e" /><stop offset=".3" stopColor="#37363b" />
          <stop offset=".41" stopColor="#4b4a4f" /><stop offset=".53" stopColor="#605e64" /><stop offset=".585" stopColor="#6b6870" />
          <stop offset=".64" stopColor="#4a494e" /><stop offset=".7" stopColor="#333237" /><stop offset=".745" stopColor="#28272c" />
          <stop offset=".82" stopColor="#2f2e32" /><stop offset="1" stopColor="#39383c" />
        </linearGradient>
        <radialGradient id="hl" cx="935" cy="2108" r="140" gradientUnits="userSpaceOnUse">
          <stop offset="0" stopColor="#9d9da1" /><stop offset=".4" stopColor="#8b8b90" stopOpacity=".85" /><stop offset="1" stopColor="#5a5a5f" stopOpacity="0" />
        </radialGradient>
        <radialGradient id="hr" cx="1664" cy="2108" r="140" gradientUnits="userSpaceOnUse">
          <stop offset="0" stopColor="#9d9da1" /><stop offset=".4" stopColor="#8b8b90" stopOpacity=".85" /><stop offset="1" stopColor="#5a5a5f" stopOpacity="0" />
        </radialGradient>
        <linearGradient id="edge">
          <stop offset="0" stopColor="#8a8a8e" /><stop offset=".02" stopColor="#c4c4c8" /><stop offset=".05" stopColor="#1d1c21" />
          <stop offset=".95" stopColor="#1d1c21" /><stop offset=".98" stopColor="#c4c4c8" /><stop offset="1" stopColor="#8a8a8e" />
        </linearGradient>
        <clipPath id="stc"><path d={body} /></clipPath>
      </defs>
      <path d={body} fill="url(#st)" />
      <g clipPath="url(#stc)">
        <rect x="900" y="1960" width="300" height="170" fill="url(#hl)" />
        <rect x="1400" y="1960" width="300" height="170" fill="url(#hr)" />
        <path d="M915 2104Q940 2113 977 2113H1622Q1660 2113 1684 2104V2122H915Z" fill="url(#edge)" />
      </g>
    </StandArt>
  );
}

/* -------------------------------------------------------------- app */

export default function App() {
  return (
    <>
      <GlobalStyle />
      <Page>
        <Monitor>
          <TopBezel><Camera /></TopBezel>
          <Screen>
            <Scene />
            <Header>
              <HeaderArt width="2340" height="110" viewBox="130 136 2340 110">
                <defs>
                  <linearGradient id="hd">
                    <stop offset="0" stopColor="#050c3a" stopOpacity="0" /><stop offset=".25" stopColor="#060d3a" stopOpacity=".62" />
                    <stop offset=".5" stopColor="#080a40" stopOpacity=".86" /><stop offset=".75" stopColor="#060d3a" stopOpacity=".62" /><stop offset="1" stopColor="#050c3a" stopOpacity="0" />
                  </linearGradient>
                  <linearGradient id="hl2" x1="130" x2="2470" y1="0" y2="0" gradientUnits="userSpaceOnUse">
                    <stop offset=".04" stopColor="#3c406c" stopOpacity="0" /><stop offset=".3" stopColor="#3c406c" /><stop offset=".7" stopColor="#3c406c" /><stop offset=".96" stopColor="#3c406c" stopOpacity="0" />
                  </linearGradient>
                </defs>
                <path d="M130 136H2470V208H1610L1583 235H1020L993 208H130Z" fill="url(#hd)" />
                <path d="M130 208H993L1020 235.500H1583L1610 208H2470" fill="none" stroke="url(#hl2)" strokeWidth="3" />
              </HeaderArt>
              <Title>3D 통합관제 모니터링</Title>
              <Brand>
                <BrandWord $from="#25b4e0" $to="#0090ff" $ls={0.4}>LINKED</BrandWord>
                <BrandWord $from="#ffffff" $to="#9c9c9c" $ls={0.6}>FIRES</BrandWord>
              </Brand>
              <Account>
                <svg width="26" height="32" viewBox="0 0 26 32" fill="#00ffff">
                  <circle cx="13" cy="7.500" r="7.500" /><path d="M5 15.500q8 5 16 0q5 2 5 9V28q0 3.500-4 3.500H4q-4 0-4-3.500v-3.500q0-7 5-9z" />
                </svg>
                <AccountText>
                  <UserName>Linked Fires Demo</UserName>
                  <Stamp>2024.01.18. 19:00:40</Stamp>
                </AccountText>
                <RoundButton>
                  <svg width="20" height="20" viewBox="0 0 20 20" fill="#00e0ec">
                    <rect width="9.200" height="9.200" rx="2" /><rect x="10.800" width="9.200" height="9.200" rx="2" /><rect y="10.800" width="9.200" height="9.200" rx="2" /><circle cx="15.400" cy="15.400" r="4.600" />
                  </svg>
                </RoundButton>
                <RoundButton>
                  <svg width="22" height="22" viewBox="0 0 22 22" fill="none" stroke="#00d6e4" strokeWidth="3" strokeLinecap="round">
                    <path d="M5.500 4.500A9 9 0 1 0 16.500 4.500" /><path d="M11 1.500V8" strokeWidth="3.500" />
                  </svg>
                </RoundButton>
              </Account>
            </Header>

            <Body>
              <SideTabs>
                <SideArt width="95" height="352" viewBox="0 0 95 352">
                  <defs>
                    <linearGradient id="sd"><stop offset="0" stopColor="#0a1e50" stopOpacity="0" /><stop offset=".3" stopColor="#10173c" stopOpacity=".6" /><stop offset="1" stopColor="#06327e" /></linearGradient>
                    <linearGradient id="sl"><stop offset="0" stopColor="#0e5b7a" stopOpacity="0" /><stop offset="1" stopColor="#0d5a86" /></linearGradient>
                  </defs>
                  <path d="M5 0L95 73V279L5 352Z" fill="url(#sd)" />
                  <path d="M5 0L94 73V279L5 352" fill="none" stroke="url(#sl)" strokeWidth="2" />
                </SideArt>
                <SideTab $active><ListIcon /></SideTab>
                <SideTab><PinIcon /></SideTab>
              </SideTabs>

              <Panel>
                <PanelHead>
                  <PanelMark />
                  <PanelTitle>장비 시설물/목록</PanelTitle>
                  <svg width="23" height="23" viewBox="0 0 23 23" stroke="#fff" strokeWidth="2.300" strokeLinecap="round"><path d="M1.500 1.500L21.500 21.500M21.500 1.500L1.500 21.500" /></svg>
                </PanelHead>
                <DeviceList>
                  {devices.map((d) => (
                    <DeviceRow key={d.name}>
                      <DeviceIcon>{d.icon}</DeviceIcon>
                      <DeviceName $latin={d.latin}>{d.name}</DeviceName>
                      <Pill>{d.n}</Pill>
                    </DeviceRow>
                  ))}
                </DeviceList>
              </Panel>

              <FloorGroup>
                <FloorTag>1F</FloorTag>
                <FloorRail><FloorDot /><FloorDot /><FloorDot $on /><FloorDot /></FloorRail>
              </FloorGroup>
            </Body>

            <Footer>
              <FooterArt width="2340" height="96" viewBox="130 1360 2340 96">
                <defs>
                  <linearGradient id="ft" x1="0" x2="0" y1="0" y2="1"><stop offset="0" stopColor="#0a3070" /><stop offset="1" stopColor="#15144c" /></linearGradient>
                </defs>
                <path d="M130 1361.500H805L886 1446.500H1717L1798 1361.500H2470V1456H130Z" fill="url(#ft)" />
                <path d="M130 1361.500H805L886 1446.500H1717L1798 1361.500H2470" fill="none" stroke="#0664a4" strokeWidth="2" />
                <path d="M130 1455.500H2470" stroke="#242468" />
              </FooterArt>
              <Nav items={leftNav} w={91.3} ml={181} />
              <StatusBar>
                {status.map((s) => (
                  <StatusItem key={s.name} $w={s.w} $pl={s.pl}>
                    <Siren c={s.c} />
                    <StatusText>
                      <StatusName>{s.name}</StatusName>
                      <StatusCount $c={s.t}>00<small>건</small></StatusCount>
                    </StatusText>
                  </StatusItem>
                ))}
              </StatusBar>
              <Nav items={rightNav} w={90} ml={184} />
              <AlarmButton>
                <AlarmIcon />
                <AlarmBadge>1</AlarmBadge>
              </AlarmButton>
            </Footer>
            <MiniMap><MiniPlan /></MiniMap>
          </Screen>
          <Chin><SiApple size={117} /></Chin>
        </Monitor>
        <Stand />
      </Page>
    </>
  );
}
